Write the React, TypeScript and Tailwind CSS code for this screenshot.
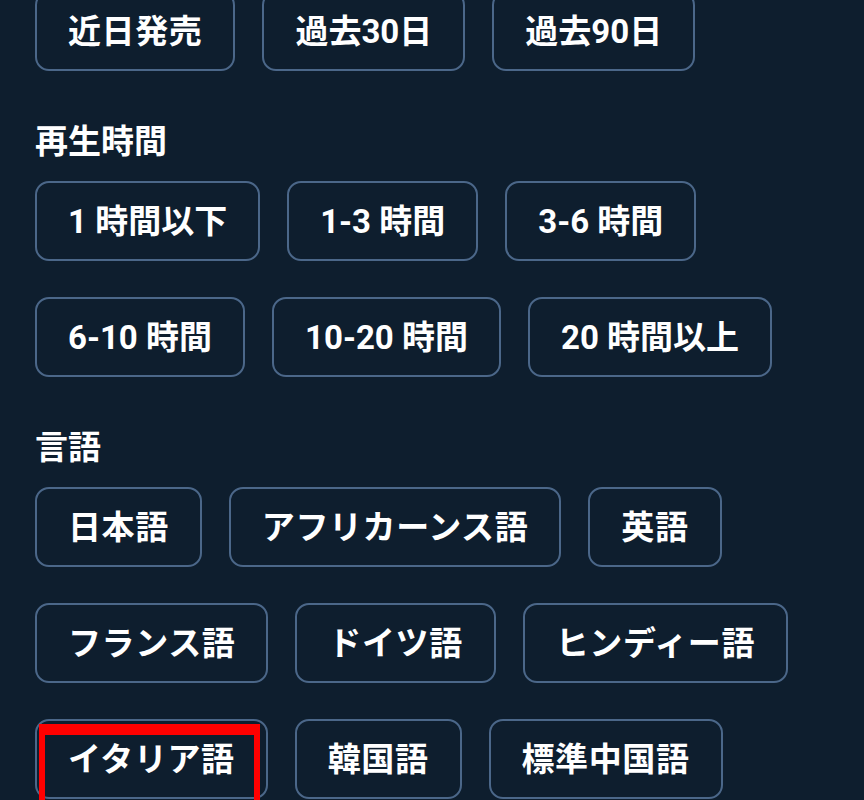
const periods = ["近日発売", "過去30日", "過去90日"];
const durations = ["1 時間以下", "1-3 時間", "3-6 時間", "6-10 時間", "10-20 時間", "20 時間以上"];
const languages = [
  "日本語", "アフリカーンス語", "英語",
  "フランス語", "ドイツ語", "ヒンディー語",
  "イタリア語", "韓国語", "標準中国語",
];

function Chip({ label, marked }: { label: string; marked?: boolean }) {
  const hasDigits = /[0-9]/.test(label);
  return (
    <button
      className={`relative h-[80px] px-[31px] rounded-[14px] border-2 border-[#4b6789] text-white text-[33px] font-bold leading-none whitespace-nowrap ${
        hasDigits ? "tracking-normal" : "tracking-[0.6px]"
      }`}
    >
      {label}
      {marked && (
        <span className="absolute left-[2px] top-[3px] w-[221px] h-[90px] border-x-[6px] border-t-[11px] border-b-[6px] border-[#ff0000]" />
      )}
    </button>
  );
}

function Section({ title, items, marked }: { title?: string; items: string[]; marked?: string }) {
  return (
    <div>
      {title && (
        <h3 className="mt-[47px] mb-[15px] h-[48px] leading-[48px] text-white text-[33px] font-bold">{title}</h3>
      )}
      <div className="flex flex-wrap gap-x-[27px] gap-y-[36px]">
        {items.map((item) => (
          <Chip key={item} label={item} marked={item === marked} />
        ))}
      </div>
    </div>
  );
}

export default function App() {
  return (
    <div
      className="w-[864px] h-[800px] overflow-hidden bg-[#0e1e2e]"
      style={{ fontFamily: 'Roboto, "Noto Sans CJK JP", sans-serif' }}
    >
      <div className="mt-[-9px] pl-[35px] pr-[40px]">
        <Section items={periods} />
        <Section title="再生時間" items={durations} />
        <Section title="言語" items={languages} marked="イタリア語" />
      </div>
    </div>
  );
}
